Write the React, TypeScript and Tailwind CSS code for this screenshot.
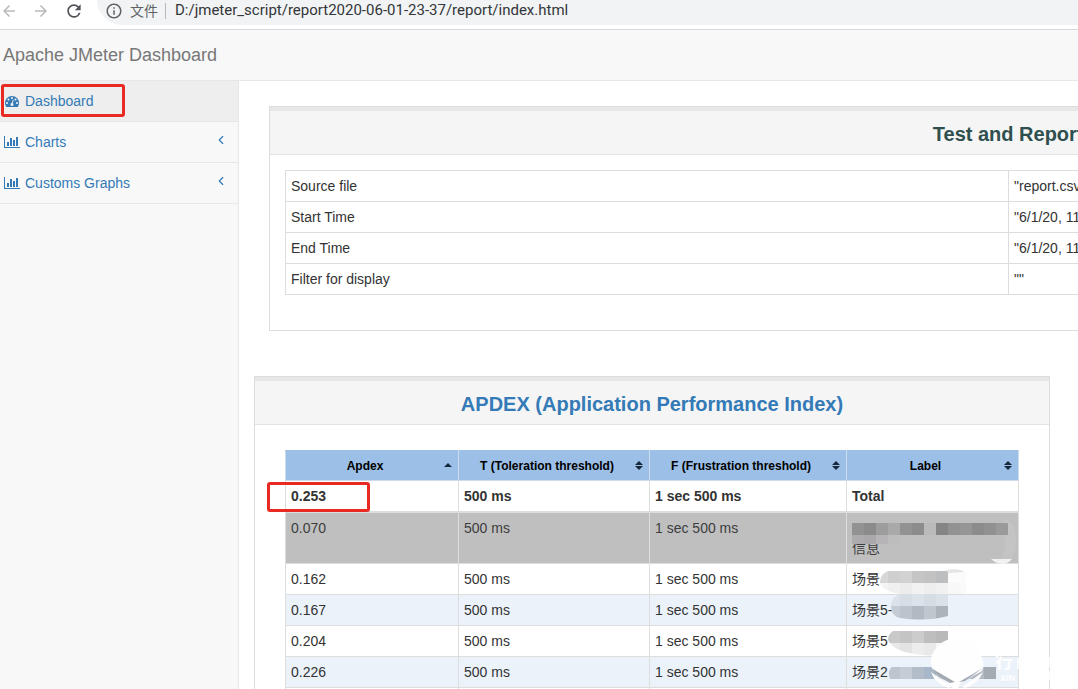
import React from "react";
import { LuChevronLeft } from "react-icons/lu";
import { MdArrowBack, MdArrowForward, MdInfoOutline, MdRefresh } from "react-icons/md";

function TachometerIcon() {
  return (
    <svg viewBox="0 0 1792 1792" className="h-3.5 w-3.5" fill="currentColor" aria-hidden="true">
      <path d="M384 1152q0-53-37.5-90.5t-90.5-37.5-90.5 37.5-37.5 90.5 37.5 90.5 90.5 37.5 90.5-37.5 37.5-90.5zm192-448q0-53-37.5-90.5t-90.5-37.5-90.5 37.5-37.5 90.5 37.5 90.5 90.5 37.5 90.5-37.5 37.5-90.5zm428 481l101-382q6-26-7.5-48.5t-38.5-29.5-48 6.5-30 39.5l-101 382q-60 5-107 43.5t-63 98.5q-20 77 20 146t117 89 146-20 89-117q16-60-6-117t-72-91zm660-33q0-53-37.5-90.5t-90.5-37.5-90.5 37.5-37.5 90.5 37.5 90.5 90.5 37.5 90.5-37.5 37.5-90.5zm-640-640q0-53-37.5-90.5t-90.5-37.5-90.5 37.5-37.5 90.5 37.5 90.5 90.5 37.5 90.5-37.5 37.5-90.5zm448 192q0-53-37.5-90.5t-90.5-37.5-90.5 37.5-37.5 90.5 37.5 90.5 90.5 37.5 90.5-37.5 37.5-90.5zm320 448q0 261-141 483-19 29-54 29h-1402q-35 0-54-29-141-221-141-483 0-182 71-348t191-286 286-191 348-71 348 71 286 191 191 286 71 348z" />
    </svg>
  );
}

function BarChartIcon() {
  return (
    <svg viewBox="0 0 2048 1792" className="h-3.5 w-4" fill="currentColor" aria-hidden="true">
      <path d="M640 896v512h-256v-512h256zM1024 384v1024h-256v-1024h256zM2048 1536v128h-2048v-1536h128v1408h1920zM1408 640v768h-256v-768h256zM1792 256v1152h-256v-1152h256z" />
    </svg>
  );
}

function SortIcon({ both }: { both: boolean }) {
  return (
    <svg viewBox="0 0 8 10" className="h-2.5 w-2" fill="#17283c" aria-hidden="true">
      {both ? <path d="M4 0 8 4H0zM0 5h8L4 9z" /> : <path d="M4 2 8 6H0z" />}
    </svg>
  );
}

const info = [
  ["Source file", '"report.csv"'],
  ["Start Time", '"6/1/20, 11:36 PM"'],
  ["End Time", '"6/1/20, 11:37 PM"'],
  ["Filter for display", '""'],
];

const headers = ["Apdex", "T (Toleration threshold)", "F (Frustration threshold)", "Label"];

const rows = [
  { apdex: "0.162", label: "场景", tone: "bg-white" },
  { apdex: "0.167", label: "场景5-", tone: "bg-[#ebf2fa]" },
  { apdex: "0.204", label: "场景5", tone: "bg-white" },
  { apdex: "0.226", label: "场景2", tone: "bg-[#ebf2fa]" },
  { apdex: "0.231", label: "场景3", tone: "bg-white" },
];

function Mosaic({ x, y, colors, h = 12, w = 12 }: { x: number; y: number; colors: string[]; h?: number; w?: number }) {
  return (
    <>
      {colors.map((c, i) => (
        <rect key={i} x={x + i * w} y={y} width={w} height={h} fill={c} />
      ))}
    </>
  );
}

function Redactions() {
  return (
    <svg
      viewBox="840 512 238 177"
      width="238"
      height="177"
      className="pointer-events-none absolute left-[555px] top-[62px]"
      aria-hidden="true"
    >
      <defs>
        <clipPath id="smudge-a">
          <path d="M888 571q40-4 60-1q16-3 18 3v21h-64q-20-2-22-12q0-8 8-11z" />
        </clipPath>
        <clipPath id="smudge-b">
          <path d="M902 594h46v22q-22 6-48 2q-9-2-9-12q0-10 11-12z" />
        </clipPath>
        <clipPath id="smudge-c">
          <path d="M893 631h55v20q-10 6-24 4q-30-2-36-15q0-6 5-9z" />
        </clipPath>
        <clipPath id="smudge-d">
          <path d="M892 667h104v12H890q-3-8 2-12z" />
        </clipPath>
      </defs>
      <path d="M1004 519q12 4 12 22q0 14-7 20l-8-2q7-14 3-24z" fill="#c4c4c4" />
      <path d="M991 559h21q-5 6-11 5t-10-5z" fill="#f1f1f1" />
      <Mosaic x={852} y={523} colors={["#929292", "#8b8b8b", "#9d9d9d", "#a9a9a9", "#929292", "#8c8c8c", "#bababa", "#858585", "#929292", "#969696", "#8c8c8c", "#919191", "#9a9a9a"]} />
      <Mosaic x={852} y={535} colors={["#adabad", "#aaa8aa", "#b6b4b6", "#bdbdbd"]} h={9} />
      <g clipPath="url(#smudge-a)">
        <Mosaic x={876} y={571} colors={["#d7d7d7", "#cfcfcf", "#d2d2d2", "#c5c5c5", "#c2c2c2", "#bcbec0", "#fbfbfb", "#fbfbfb"]} />
        <Mosaic x={876} y={583} colors={["#f4f4f4", "#f0f0f0", "#ececec", "#f2f2f2", "#eeeeee", "#f1f1f1", "#f8f8f8", "#fafafa"]} />
      </g>
      <path d="M946 570q14-2 18 2l-16 1z" fill="#e4e4e4" />
      <g clipPath="url(#smudge-b)">
        <Mosaic x={888} y={594} colors={["#dce2e9", "#d7dde5", "#dce2e9", "#d5dce4", "#dbe1e8"]} />
        <Mosaic x={888} y={606} colors={["#c4cbd3", "#bcc3cc", "#b3b9c2", "#c0c6ce", "#adb3bb"]} h={14} />
      </g>
      <g clipPath="url(#smudge-c)">
        <Mosaic x={888} y={631} colors={["#c9c9c9", "#c4c4c4", "#cccccc", "#bebebe", "#b9b9b9"]} />
        <Mosaic x={888} y={643} colors={["#e8e8e8", "#e3e3e3", "#ededed", "#e9e9e9", "#f6f6f6"]} h={14} />
      </g>
      <g clipPath="url(#smudge-d)">
        <Mosaic x={888} y={667} colors={["#bec5cf", "#c5ccd6", "#b2bdc9", "#a8b7ca", "#d3dae3", "#b9c0c8", "#bdc6d0", "#b3bac3", "#a4abb3"]} />
      </g>
      <path
        d="M958 638q17 0 24 20q3 8 0 13l-22 12l-2 6h-4l-21-18q-4-8-1-16q8-17 26-17zM931 672l20 15l-2 1q-14-4-18-16zM983 672l-21 15l3 1q13-4 18-16z"
        fill="#fefefe"
      />
      <path d="M931 668l24 14l-5 1q-15-7-19-15zM983 668l-18 13l-6 1z" fill="#a4aab1" />
      <path d="M1017 658h4v11h-4zM1046 657h6v10h-6zM1046 671h6v9h-6z" fill="#ffffff" fillOpacity="0.8" />
      <g fill="#ffffff" fontWeight="700">
        <text x="995" y="668" fontSize="18" fontFamily="'Noto Sans CJK SC', sans-serif">行</text>
        <text x="1000" y="681" fontSize="9" fontStyle="italic" fontFamily="'Liberation Sans', sans-serif">XIN</text>
      </g>
    </svg>
  );
}

function SidebarItem({ icon, text, active, arrow }: { icon: React.ReactNode; text: string; active?: boolean; arrow?: boolean }) {
  return (
    <li className="border-b border-[#e7e7e7]">
      <a
        href="#"
        className={
          active
            ? "flex h-10 items-center bg-[#eeeeee] pl-[5px] pr-2.5 text-[#337ab7]"
            : "flex h-10 items-center pl-1 pr-2.5 text-[#337ab7]"
        }
      >
        {icon}
        <span className={active ? "ml-1.5" : "ml-[5px]"}>{text}</span>
        {arrow && <LuChevronLeft className="mb-1 ml-auto h-3.5 w-3.5" />}
      </a>
    </li>
  );
}

export default function App() {
  return (
    <div className="flex h-screen flex-col overflow-hidden bg-white font-['Liberation_Sans','Noto_Sans_CJK_SC',sans-serif] text-sm leading-5 text-[#333333]">
      <div className="flex h-[30px] shrink-0 items-start border-b border-[#d5d9df] bg-white">
        <div className="flex h-[22px] w-[97px] shrink-0 items-center gap-3.5">
          <button aria-label="Back"><MdArrowBack className="h-[18px] w-[18px] text-[#b9babc]" /></button>
          <button aria-label="Forward"><MdArrowForward className="h-[18px] w-[18px] text-[#b9babc]" /></button>
          <button aria-label="Reload"><MdRefresh className="h-5 w-5 text-[#505357]" /></button>
        </div>
        <div className="flex h-[25px] flex-1 items-start rounded-bl-full bg-[#f1f3f4] pl-2 text-sm">
          <div className="flex h-[22px] flex-1 items-center">
            <MdInfoOutline className="h-[18px] w-[18px] text-[#5f6368]" />
            <span className="ml-[7px] text-[#5f6368]">文件</span>
            <span className="ml-[7px] h-4 w-px bg-[#b5b8bb]" />
            <input
              aria-label="Address"
              readOnly
              value="D:/jmeter_script/report2020-06-01-23-37/report/index.html"
              className="ml-[9px] min-w-0 flex-1 bg-transparent font-['Roboto',sans-serif] text-[15px] text-[#33363a] outline-none"
            />
          </div>
        </div>
      </div>

      <header className="flex h-[51px] shrink-0 items-center border-b border-[#e7e7e7] bg-[#f8f8f8] pl-[3px]">
        <a href="#" className="text-lg text-[#777777]">Apache JMeter Dashboard</a>
      </header>

      <div className="flex min-h-0 flex-1">
        <nav className="relative w-[239px] shrink-0 border-r border-[#e7e7e7] bg-[#f8f8f8]">
          <ul>
            <SidebarItem icon={<TachometerIcon />} text="Dashboard" active />
            <SidebarItem icon={<BarChartIcon />} text="Charts" arrow />
            <SidebarItem icon={<BarChartIcon />} text="Customs Graphs" arrow />
          </ul>
          <div className="pointer-events-none absolute left-px top-[3px] h-[33px] w-[124px] rounded-[3px] border-3 border-[#e82a22]" />
        </nav>

        <main className="min-w-0 flex-1 overflow-hidden pl-[15px] pt-[25px]">
          <section className="ml-[15px] w-[1605px] border border-[#dddddd] pb-[35px]">
            <h2 className="h-12 border-b border-t-4 border-b-[#e3e3e3] border-t-[#e7e7e8] bg-[#f5f5f5] pt-[9px] text-center text-xl leading-7 font-bold text-[#2f4f4f]">
              Test and Report informations
            </h2>
            <table className="mx-[15px] mt-[15px] w-[1573px] table-fixed border-collapse">
              <tbody>
                {info.map(([name, value]) => (
                  <tr key={name} className="h-[31px]">
                    <td className="w-[723px] border border-[#dddddd] px-[5px]">{name}</td>
                    <td className="border border-[#dddddd] px-[5px]">{value}</td>
                  </tr>
                ))}
              </tbody>
            </table>
          </section>

          <section className="mr-7 mt-[45px] border border-[#dddddd] pb-8">
            <h2 className="h-12 border-b border-t-4 border-b-[#e3e3e3] border-t-[#e7e7e8] bg-[#f5f5f5] pt-[9px] text-center text-xl leading-7 font-bold text-[#337ab7]">
              <a href="#">APDEX (Application Performance Index)</a>
            </h2>
            <div className="relative ml-[30px] mr-[30px] mt-[25px]">
              <table className="w-full table-fixed border-collapse">
                <colgroup>
                  <col className="w-[173px]" />
                  <col className="w-[191px]" />
                  <col className="w-[197px]" />
                  <col />
                </colgroup>
                <thead>
                  <tr className="h-[30px] bg-[#9bbfe6] text-[12px] text-black">
                    {headers.map((h, i) => (
                      <th key={h} className="border border-[#cddbea] border-t-[#9bbfe6] p-0 font-bold">
                        <button className="flex w-full items-center pr-1.5">
                          <span className="flex-1 text-center">{h}</span>
                          <SortIcon both={i > 0} />
                        </button>
                      </th>
                    ))}
                  </tr>
                </thead>
                <tbody>
                  <tr className="h-[31px] border-b-2 border-[#dddddd] bg-white font-bold">
                    <td className="border-x border-[#dddddd] px-[5px]">0.253</td>
                    <td className="border-x border-[#dddddd] px-[5px]">500 ms</td>
                    <td className="border-x border-[#dddddd] px-[5px]">1 sec 500 ms</td>
                    <td className="border-x border-[#dddddd] px-[5px]">Total</td>
                  </tr>
                  <tr className="h-[52px] bg-[#bfbfbf] align-top text-[#3d3d3d]">
                    <td className="border border-[#dddddd] px-[5px] pt-[5px]">0.070</td>
                    <td className="border border-[#dddddd] px-[5px] pt-[5px]">500 ms</td>
                    <td className="border border-[#dddddd] px-[5px] pt-[5px]">1 sec 500 ms</td>
                    <td className="border border-[#dddddd] px-[5px] pt-[25px]">信息</td>
                  </tr>
                  {rows.map((r) => (
                    <tr key={r.apdex} className={r.tone}>
                      <td className="h-[31px] border border-[#dddddd] px-[5px]">{r.apdex}</td>
                      <td className="border border-[#dddddd] px-[5px]">500 ms</td>
                      <td className="border border-[#dddddd] px-[5px]">1 sec 500 ms</td>
                      <td className="border border-[#dddddd] px-[5px]">{r.label}</td>
                    </tr>
                  ))}
                </tbody>
              </table>
              <Redactions />
              <div className="pointer-events-none absolute -left-[18px] top-8 h-[30px] w-[103px] rounded-[3px] border-3 border-[#e82a22]" />
            </div>
          </section>
        </main>
      </div>
    </div>
  );
}
